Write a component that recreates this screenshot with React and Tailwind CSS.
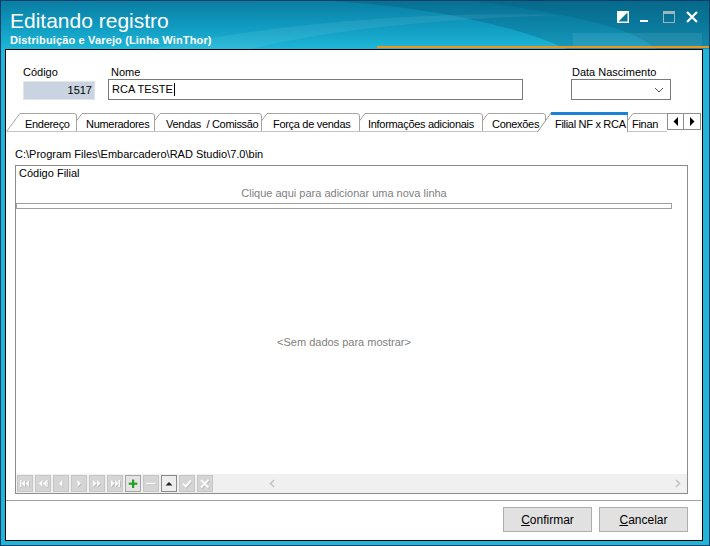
import React from "react";

function TitleBar() {
  return (
    <div className="relative h-[48px] shrink-0 overflow-hidden bg-gradient-to-b from-[#0a7da2] via-[#1099bf] to-[#1db7d8]">
      <svg className="absolute inset-0" width="708" height="48" viewBox="0 0 708 48">
        <path d="M330 0 C 430 6 520 26 565 48 L 708 48 L 708 0 Z" fill="#03506e" opacity="0.28" />
        <path d="M470 0 C 550 10 630 24 655 48 L 708 48 L 708 0 Z" fill="#03506e" opacity="0.22" />
        <path d="M150 48 C 280 22 420 10 560 14 C 430 18 320 30 250 48 Z" fill="#ffffff" opacity="0.07" />
        <rect x="572" y="32" width="129" height="13" fill="#ffffff" opacity="0.08" />
        <rect x="376" y="45" width="332" height="2" fill="#e8961e" />
      </svg>
      <div className="relative flex">
        <div className="pl-[9px] pt-[9px] text-white">
          <div className="text-[21px] leading-[21px]">Editando registro</div>
          <div className="mt-[4px] text-[11px] leading-[11px] font-bold tracking-[0.15px]">Distribuição e Varejo (Linha WinThor)</div>
        </div>
        <div className="ml-auto flex pt-[10px] pr-[11px]">
          <svg width="12" height="12" viewBox="0 0 12 12">
            <rect x="0.75" y="0.75" width="10.5" height="10.5" fill="none" stroke="#ffffff" strokeWidth="1.5" />
            <polygon points="0,0 12,0 0,12" fill="#ffffff" />
          </svg>
          <svg className="ml-[9px]" width="12" height="12" viewBox="0 0 12 12">
            <rect x="2" y="9" width="8" height="2" fill="#ffffff" />
          </svg>
          <svg className="ml-[13px]" width="12" height="12" viewBox="0 0 12 12">
            <rect x="0.5" y="0.5" width="11" height="11" fill="none" stroke="#9cb6c0" strokeWidth="1" />
            <rect x="0" y="0" width="12" height="3" fill="#9cb6c0" />
          </svg>
          <svg className="ml-[11px]" width="12" height="12" viewBox="0 0 12 12">
            <path d="M1 1 L11 11 M11 1 L1 11" stroke="#ffffff" strokeWidth="2.2" />
          </svg>
        </div>
      </div>
    </div>
  );
}

function Tab({ cls, w, label, pl, active }) {
  return (
    <div className={"relative shrink-0 h-[20px] " + cls}>
      <svg className="absolute inset-0" width={w} height="20" viewBox={`0 0 ${w} 20`}>
        {active ? (
          <>
            <path d={`M0.5 20 L14 1 L${w - 0.5} 1 L${w - 0.5} 20`} fill="#ffffff" stroke="#9a9a9a" />
            <rect x="14" y="0" width={w - 14} height="3" fill="#1a82d8" />
          </>
        ) : (
          <>
            <path d={`M0.5 19.5 L14 1.5 L${w - 3} 1.5 Q${w - 0.5} 1.5 ${w - 0.5} 4 L${w - 0.5} 19.5 Z`} fill="#ffffff" stroke="#a4a4a4" />
            <line x1="0" y1="19.5" x2={w} y2="19.5" stroke="#c4c4c4" />
          </>
        )}
      </svg>
      <div className={"relative whitespace-pre leading-[13px] pt-[6px] tracking-[-0.3px] " + pl}>{label}</div>
    </div>
  );
}

function NavBtn({ kind, children }) {
  const base = "w-[16px] h-[17px] shrink-0 border flex items-center justify-center";
  const cls =
    kind === "plus"
      ? " bg-[#e4e4e4] border-[#a6a6a6]"
      : kind === "up"
      ? " bg-[#ededed] border-[#8a8a8a]"
      : " bg-[#d5d5d5] border-[#c6c6c6]";
  return (
    <div className={base + cls}>
      <svg width="14" height="15" viewBox="0 0 14 15">
        {children}
      </svg>
    </div>
  );
}

function Emb({ children }) {
  return (
    <>
      <g transform="translate(0.7 0.7)" fill="#b2b2b2" stroke="none">{children}</g>
      <g fill="#fbfbfb" stroke="none">{children}</g>
    </>
  );
}

export default function App() {
  return (
    <div className="w-[710px] h-[546px] flex flex-col border border-[#0b3f6b] bg-[#1fb4d8] font-['Liberation_Sans',Arial,sans-serif] text-[11px] text-black overflow-hidden">
      <TitleBar />
      <div className="flex-1 flex pl-[4px] pr-[6px] pb-[4px] min-h-0">
        <div className="flex-1 border border-black bg-white flex flex-col min-w-0 min-h-0">
          {/* form row */}
          <div className="flex pt-[16px]">
            <div className="ml-[17px] w-[72px] flex flex-col">
              <div className="leading-[13px] h-[13px]">Código</div>
              <div className="mt-[2px] h-[19px] bg-[#c9d4e0] border border-[#dfe5eb] flex items-center justify-end pr-[2px] leading-[13px]">1517</div>
            </div>
            <div className="ml-[13px] w-[415px] flex flex-col">
              <div className="leading-[13px] h-[13px] pl-[3px]">Nome</div>
              <div className="h-[21px] border border-[#7a7a7a] flex items-center pl-[3px] leading-[13px]">
                <span>RCA TESTE</span>
                <span className="ml-[1px] w-px h-[13px] bg-black" />
              </div>
            </div>
            <div className="ml-[48px] w-[100px] flex flex-col">
              <div className="leading-[13px] h-[13px] pl-[1px]">Data Nascimento</div>
              <div className="h-[21px] border border-[#7a7a7a] flex items-center justify-end pr-[6px]">
                <svg width="10" height="6" viewBox="0 0 10 6">
                  <polyline points="1,1 5,5 9,1" fill="none" stroke="#555555" strokeWidth="1" />
                </svg>
              </div>
            </div>
          </div>

          {/* tabs */}
          <div className="mt-[12px] flex h-[20px]">
            <div className="w-[661px] flex overflow-hidden h-[20px]">
              <Tab cls="w-[71px] z-[8]" w={71} pl="pl-[19px]" label="Endereço" />
              <Tab cls="w-[87px] z-[7] ml-[-9px]" w={87} pl="pl-[18px]" label="Numeradores" />
              <Tab cls="w-[116px] z-[6] ml-[-9px]" w={116} pl="pl-[20px]" label="Vendas  / Comissão" />
              <Tab cls="w-[107px] z-[5] ml-[-9px]" w={107} pl="pl-[20px]" label="Força de vendas" />
              <Tab cls="w-[132px] z-[4] ml-[-9px]" w={132} pl="pl-[17px]" label="Informações adicionais" />
              <Tab cls="w-[72px] z-[3] ml-[-9px]" w={72} pl="pl-[18px]" label="Conexões" />
              <Tab cls="w-[91px] z-[10] ml-[-9px]" w={91} pl="pl-[18px]" label="Filial NF x RCA" active />
              <Tab cls="w-[50px] z-[1] ml-[-9px]" w={50} pl="pl-[13px]" label="Finan" />
            </div>
            <div className="flex pt-[1px]">
              <div className="w-[17px] h-[17px] border border-[#8e8e8e] bg-white flex items-center justify-center">
                <svg width="6" height="9" viewBox="0 0 6 9"><polygon points="5,0 5,9 0.5,4.5" fill="#000" /></svg>
              </div>
              <div className="w-[17px] h-[17px] border border-[#8e8e8e] border-l-0 bg-white flex items-center justify-center">
                <svg width="6" height="9" viewBox="0 0 6 9"><polygon points="1,0 1,9 5.5,4.5" fill="#000" /></svg>
              </div>
            </div>
          </div>

          {/* path */}
          <div className="mt-[16px] pl-[9px] leading-[13px] h-[13px] whitespace-nowrap">
            {"C:\\Program Files\\Embarcadero\\RAD Studio\\7.0\\bin"}
          </div>

          {/* grid */}
          <div className="mt-[4px] ml-[9px] w-[673px] h-[329px] shrink-0 border border-[#8c8c8c] flex flex-col">
            <div className="flex-1 flex min-h-0">
              <div className="flex-1 flex flex-col min-w-0">
                <div className="pl-[3px] pt-[1px] leading-[13px]">Código Filial</div>
                <div className="mt-[7px] text-center leading-[13px] text-[#7f7f7f]">Clique aqui para adicionar uma nova linha</div>
                <div className="mt-[3px] h-[6px] border border-[#a0a0a0]" />
                <div className="flex-1 flex items-center justify-center text-[#808080] leading-[13px] pt-[2px]">&lt;Sem dados para mostrar&gt;</div>
              </div>
              <div className="w-[15px]" />
            </div>
            <div className="h-[19px] bg-[#f0f0f0] flex items-center pl-[1px] gap-[2px]">
              <NavBtn>
                <Emb>
                  <rect x="2" y="4" width="1.5" height="7" />
                  <polygon points="7,4 7,11 3.5,7.5" />
                  <polygon points="11,4 11,11 7.5,7.5" />
                </Emb>
              </NavBtn>
              <NavBtn>
                <Emb>
                  <polygon points="6.5,4 6.5,11 3,7.5" />
                  <polygon points="10.5,4 10.5,11 7,7.5" />
                  <rect x="10.5" y="4" width="1.2" height="7" />
                </Emb>
              </NavBtn>
              <NavBtn>
                <Emb>
                  <polygon points="8.5,4 8.5,11 5,7.5" />
                </Emb>
              </NavBtn>
              <NavBtn>
                <Emb>
                  <polygon points="5.5,4 5.5,11 9,7.5" />
                </Emb>
              </NavBtn>
              <NavBtn>
                <Emb>
                  <polygon points="3,4 3,11 6.5,7.5" />
                  <polygon points="7,4 7,11 10.5,7.5" />
                </Emb>
              </NavBtn>
              <NavBtn>
                <Emb>
                  <polygon points="3,4 3,11 6.5,7.5" />
                  <polygon points="7,4 7,11 10.5,7.5" />
                  <rect x="10.5" y="4" width="1.5" height="7" />
                </Emb>
              </NavBtn>
              <NavBtn kind="plus">
                <rect x="6" y="3.5" width="2.2" height="8.5" fill="#22a022" />
                <rect x="2.8" y="6.6" width="8.5" height="2.2" fill="#22a022" />
              </NavBtn>
              <NavBtn>
                <Emb>
                  <rect x="2.5" y="6.8" width="9" height="1.6" />
                </Emb>
              </NavBtn>
              <NavBtn kind="up">
                <polygon points="3.5,9.5 10.5,9.5 7,6" fill="#222" />
              </NavBtn>
              <NavBtn>
                <g transform="translate(0.7 0.7)">
                  <polyline points="3,7.5 6,10.5 11,4.5" fill="none" stroke="#b2b2b2" strokeWidth="2" />
                </g>
                <polyline points="3,7.5 6,10.5 11,4.5" fill="none" stroke="#fbfbfb" strokeWidth="2" />
              </NavBtn>
              <NavBtn>
                <g transform="translate(0.7 0.7)">
                  <path d="M3 4 L10.5 11.5 M10.5 4 L3 11.5" stroke="#b2b2b2" strokeWidth="2" />
                </g>
                <path d="M3 4 L10.5 11.5 M10.5 4 L3 11.5" stroke="#fbfbfb" strokeWidth="2" />
              </NavBtn>
              <svg className="ml-[54px]" width="6" height="9" viewBox="0 0 6 9">
                <polyline points="5,1 1.5,4.5 5,8" fill="none" stroke="#c4c4c4" strokeWidth="1.6" />
              </svg>
              <svg className="ml-auto mr-[6px]" width="6" height="9" viewBox="0 0 6 9">
                <polyline points="1,1 4.5,4.5 1,8" fill="none" stroke="#c4c4c4" strokeWidth="1.6" />
              </svg>
            </div>
          </div>

          {/* separator */}
          <div className="mt-[6px] h-px bg-[#a0a0a0] mr-[1px]" />

          {/* buttons */}
          <div className="mt-[6px] flex justify-end gap-[7px] pr-[14px]">
            <button className="w-[89px] h-[25px] bg-[#e1e1e1] border border-[#adadad] text-[12px] leading-[14px] text-black">
              <span className="underline">C</span>onfirmar
            </button>
            <button className="w-[89px] h-[25px] bg-[#e1e1e1] border border-[#adadad] text-[12px] leading-[14px] text-black">
              <span className="underline">C</span>ancelar
            </button>
          </div>
        </div>
      </div>
    </div>
  );
}
